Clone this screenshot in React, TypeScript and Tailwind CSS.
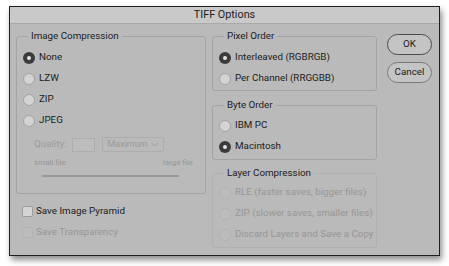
import React from 'react';

type RadioState = 'on' | 'off' | 'disabled';

const Radio: React.FC<{ label: string; state: RadioState }> = ({ label, state }) => (
  <div className="flex items-center h-[21px] gap-[4px]">
    {state === 'on' ? (
      <span className="w-[12px] h-[12px] rounded-full bg-[#3b3b3b] flex items-center justify-center">
        <span className="w-[4px] h-[4px] rounded-full bg-[#e6e6e6]" />
      </span>
    ) : state === 'off' ? (
      <span className="w-[12px] h-[12px] rounded-full bg-[#d4d4d4] border border-[#a2a2a2]" />
    ) : (
      <span className="w-[12px] h-[12px] rounded-full bg-[#bcbcbc] border border-[#b2b2b2]" />
    )}
    <span className={state === 'disabled' ? 'text-[#969696]' : 'text-[#1c1c1c]'}>{label}</span>
  </div>
);

const Group: React.FC<{ title: string; className: string; disabled?: boolean; children: React.ReactNode }> = ({
  title,
  className,
  disabled,
  children,
}) => (
  <fieldset
    className={`border rounded-[3px] pl-[6px] ${disabled ? 'border-[#b0b0b0]' : 'border-[#a4a4a4]'} ${className}`}
  >
    <legend className="ml-[5px] px-[3px] leading-[14px] text-[#1c1c1c]">{title}</legend>
    {children}
  </fieldset>
);

const Checkbox: React.FC<{ label: string; disabled?: boolean }> = ({ label, disabled }) => (
  <div className="flex items-center h-[21px] gap-[3px]">
    <span
      className={`w-[11px] h-[11px] rounded-[2px] border ${
        disabled ? 'bg-[#bcbcbc] border-[#b2b2b2]' : 'bg-[#d4d4d4] border-[#9d9d9d]'
      }`}
    />
    <span className={disabled ? 'text-[#969696]' : 'text-[#1c1c1c]'}>{label}</span>
  </div>
);

export default function App() {
  return (
    <div
      className="w-[449px] h-[266px] bg-white pt-[6px] pl-[9px] text-[9.8px]"
      style={{ fontFamily: 'Roboto, "Liberation Sans", Arial, sans-serif' }}
    >
      <div className="w-[431px] h-[250px] bg-[#bababa] border-[1.5px] border-[#1f1f1f] shadow-[2px_4px_6px_rgba(0,0,0,0.45)] flex flex-col">
        <div className="h-[17px] bg-[#c9c9c9] border-b border-[#a9a9a9] flex items-center justify-center text-[10.8px] text-[#1c1c1c]">
          TIFF Options
        </div>
        <div className="flex pt-[5px] pl-[6px]">
          <div className="w-[190px] flex flex-col">
            <Group title="Image Compression" className="h-[165px] pt-[4px]">
              <Radio label="None" state="on" />
              <Radio label="LZW" state="off" />
              <Radio label="ZIP" state="off" />
              <Radio label="JPEG" state="off" />
              <div className="flex items-center h-[17px] mt-[5px] pl-[11px] text-[#9a9a9a]">
                <span>Quality:</span>
                <span className="ml-[6px] w-[23px] h-[14px] border border-[#adadad] bg-[#bdbdbd]" />
                <span className="ml-[7px] w-[62px] h-[15px] border border-[#adadad] rounded-[2px] flex items-center justify-between pl-[4px] pr-[5px] text-[9px]">
                  <span>Maximum</span>
                  <svg width="7" height="5" viewBox="0 0 7 5" fill="none">
                    <path d="M0.5 1 L3.5 4 L6.5 1" stroke="#a0a0a0" strokeWidth="1" />
                  </svg>
                </span>
              </div>
              <div className="flex justify-between pl-[11px] pr-[12px] mt-[4px] text-[8px] text-[#969696]">
                <span>small file</span>
                <span>large file</span>
              </div>
              <div className="ml-[19px] mt-[6px] w-[137px] h-[2px] bg-[#999999]" />
            </Group>
            <div className="pl-[6px] mt-[7px]">
              <Checkbox label="Save Image Pyramid" />
              <Checkbox label="Save Transparency" disabled />
            </div>
          </div>
          <div className="ml-[6px] w-[165px] flex flex-col">
            <Group title="Pixel Order" className="h-[62px] pt-[4px]">
              <Radio label="Interleaved (RGBRGB)" state="on" />
              <Radio label="Per Channel (RRGGBB)" state="off" />
            </Group>
            <Group title="Byte Order" className="h-[62px] pt-[3px] mt-[7px]">
              <Radio label="IBM PC" state="off" />
              <Radio label="Macintosh" state="on" />
            </Group>
            <Group title="Layer Compression" className="h-[82px] pt-[2px] mt-[6px]" disabled>
              <Radio label="RLE (faster saves, bigger files)" state="disabled" />
              <Radio label="ZIP (slower saves, smaller files)" state="disabled" />
              <Radio label="Discard Layers and Save a Copy" state="disabled" />
            </Group>
          </div>
          <div className="ml-[10px] flex flex-col gap-[7px] pt-[5px]">
            <button className="w-[45px] h-[21px] rounded-full border border-[#4a4a4a] bg-[#c4c4c4] text-[#1c1c1c]">
              OK
            </button>
            <button className="w-[45px] h-[21px] rounded-full border border-[#7a7a7a] bg-[#c4c4c4] text-[#1c1c1c]">
              Cancel
            </button>
          </div>
        </div>
      </div>
    </div>
  );
}
